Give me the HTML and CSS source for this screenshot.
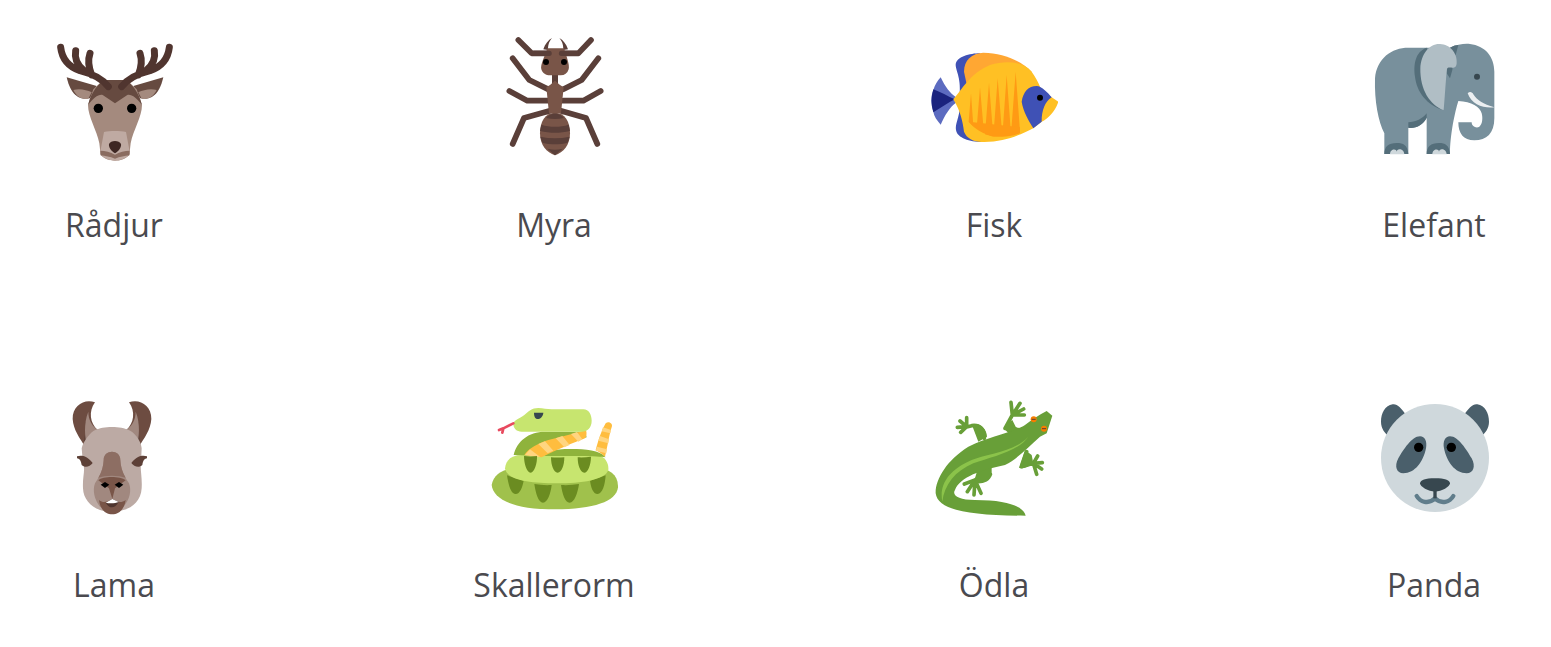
FILE: index.html

```html
<!DOCTYPE html>
<html lang="sv">
<head>
  <meta charset="UTF-8">
  <title>Djur</title>
  <link rel="stylesheet" href="styles.css">
</head>
<body>
  <div class="animal-grid">

    <div class="animal">
      <svg class="animal-icon" viewBox="30 9 384 384">
        <path d="M80 142L170 168L150 205C125 210 95 205 80 142Z" fill="#664a40"/>
        <path d="M100 180C120 175 140 180 155 187L145 206C125 210 110 200 100 180Z" fill="#a48a7e"/>
        <path d="M370 142L280 168L300 205C325 210 355 205 370 142Z" fill="#664a40"/>
        <path d="M350 180C330 175 310 180 295 187L305 206C325 210 340 200 350 180Z" fill="#a48a7e"/>
        <path d="M190 150H260L290 178L306 225C306 260 280 300 272 340L268 375C255 388 240 392 225 392C210 392 195 388 182 375L178 340C170 300 144 260 144 225L160 178Z" fill="#a48a7e"/>
        <path d="M190 150H260C270 160 295 180 306 225C290 205 275 192 262 195L225 220L188 195C175 192 160 205 144 225C155 180 180 160 190 150Z" fill="#664a40"/>
        <path d="M192 306C210 302 240 302 258 306L270 370C262 385 240 392 225 392C210 392 188 385 180 370Z" fill="#bfaaa2"/>
        <path d="M181 362C195 362 212 366 225 374C238 366 255 362 269 362L268 376C255 378 240 380 225 386C210 380 195 378 182 376Z" fill="#8a6c60"/>
        <path d="M207 342C212 330 238 330 243 342C245 352 235 364 225 370C215 364 205 352 207 342Z" fill="#3e2723"/>
        <path d="M62 52C66 85 85 110 120 122C160 132 190 150 205 170M107 62C103 85 112 105 130 120M150 70C143 90 145 110 155 135M388 52C384 85 365 110 330 122C290 132 260 150 245 170M343 62C347 85 338 105 320 120M300 70C307 90 305 110 295 135" fill="none" stroke="#50352f" stroke-width="21" stroke-linecap="round"/>
        <circle cx="175" cy="235" r="14" fill="#000"/>
        <circle cx="275" cy="235" r="14" fill="#000"/>
      </svg>
      <div class="animal-name">Rådjur</div>
    </div>

    <div class="animal">
      <svg class="animal-icon" viewBox="0 9 384 384">
        <path d="M85 30L125 70H180M303 30L265 70H210M68 85L118 150L175 178M325 85L275 150L220 178M58 183L112 212H175M332 183L280 212H220M68 342L102 264L180 242M322 342L288 264L212 242" fill="none" stroke="#5a3f39" stroke-width="17" stroke-linecap="round" stroke-linejoin="round"/>
        <path d="M160 58C165 42 175 30 186 24C176 36 174 46 174 60ZM234 58C229 42 219 30 208 24C218 36 220 46 220 60Z" fill="#5a3f39"/>
        <rect x="186" y="128" width="18" height="40" fill="#5a3f39"/>
        <path d="M172 55H222C228 75 240 105 236 118C232 130 224 136 212 136H180C168 136 158 130 154 118C150 105 166 75 172 55Z" fill="#795548"/>
        <path d="M130 62H178C188 62 188 78 178 78H130ZM214 62H265V78H214C204 78 204 62 214 62Z" fill="#5a3f39"/>
        <circle cx="168" cy="96" r="9" fill="#000"/>
        <circle cx="222" cy="96" r="9" fill="#000"/>
        <path d="M180 165L195 152L210 165L221 172L213 250H177L169 172Z" fill="#795548"/>
        <path d="M195 248C225 248 240 275 240 310C240 345 220 368 195 376C170 368 150 345 150 310C150 275 165 248 195 248Z" fill="#795548"/>
        <path d="M168 264C182 246 208 246 222 264C205 268 185 268 168 264ZM154 284C180 292 210 292 236 284L240 303C210 310 180 310 150 303ZM151 320C180 326 210 326 239 320L233 338C210 344 180 344 157 338ZM172 356C188 360 202 360 218 356L195 376Z" fill="#5a3f39"/>
      </svg>
      <div class="animal-name">Myra</div>
    </div>

    <div class="animal">
      <svg class="animal-icon" viewBox="30 -21 384 384">
        <path d="M62 112C75 140 90 160 108 172V188C90 200 75 225 62 254C50 240 42 228 40 215C32 190 32 170 40 150C45 135 52 122 62 112Z" fill="#5c6bc0"/>
        <path d="M40 148C60 155 85 170 105 178C85 188 60 205 40 217C33 195 33 170 40 148Z" fill="#1a237e"/>
        <path d="M180 40C150 40 108 50 107 75C108 95 125 115 118 175C125 225 105 245 108 270C112 295 150 305 185 306Z" fill="#3f51b5"/>
        <path d="M132 95C132 60 155 40 190 38C250 40 300 60 335 95L150 180Z" fill="#ffa733"/>
        <path d="M100 178C125 150 150 100 210 75C260 60 310 65 335 95C345 110 355 125 362 145L395 172L415 185C405 215 385 235 365 245L340 265C300 285 250 308 185 306C160 305 140 295 132 275C128 245 122 215 100 178Z" fill="#ffc024"/>
        <path d="M146 245L153 160L160 258ZM170 265L180 142L192 280ZM195 283L207 128L220 290ZM220 290L233 115L247 288ZM247 288L260 105L273 283ZM273 283L287 95L300 275Z" fill="#ff9a14"/>
        <path d="M146 245L300 262V280C270 292 240 292 215 287C190 282 165 268 146 245Z" fill="#ff9a14"/>
        <path d="M305 185C310 155 325 138 350 138C365 138 385 160 395 172C375 185 365 210 365 245L340 265C325 240 310 215 305 185Z" fill="#3f51b5"/>
        <circle cx="360" cy="173" r="9" fill="#000"/>
      </svg>
      <div class="animal-name">Fisk</div>
    </div>

    <div class="animal">
      <svg class="animal-icon" viewBox="15 -6 384 384">
        <path d="M30 130C35 70 80 38 130 38H255C275 28 300 25 315 27C360 32 388 65 388 110V250C388 295 365 316 328 316C295 316 280 295 280 262H320C320 275 335 281 343 275C352 268 354 250 350 235C345 215 320 200 280 198C270 230 255 300 255 357H185V248C175 270 150 282 130 278V357H58V295C40 260 28 200 30 130Z" fill="#78909c"/>
        <path d="M130 262C150 262 175 250 185 235V248C175 270 150 282 130 278Z" fill="#546e7a"/>
        <path d="M185 38C150 50 145 90 150 125C155 170 185 210 236 226Z" fill="#546e7a"/>
        <path d="M255 38C265 32 275 30 280 30L272 60L262 60ZM245 100C255 85 265 95 262 105L255 130L245 115Z" fill="#546e7a"/>
        <path d="M166 100C168 55 195 25 225 27C255 28 278 55 275 85C273 110 250 90 246 102C243 125 240 180 236 226C195 210 165 165 166 100Z" fill="#b0bec5"/>
        <path d="M308 175C315 168 322 172 325 178C335 195 355 208 388 217C355 220 320 210 308 175Z" fill="#eceff1"/>
        <circle cx="336" cy="125" r="9" fill="#37474f"/>
        <path d="M58 357C58 335 70 324 95 324C115 324 128 330 130 357ZM185 357C185 335 197 324 222 324C240 324 253 330 255 357Z" fill="#546e7a"/>
        <path d="M75 358C75 340 95 340 95 350C95 338 118 340 118 358ZM202 358C202 340 222 340 222 350C222 338 245 340 245 358Z" fill="#cfd8dc"/>
      </svg>
      <div class="animal-name">Elefant</div>
    </div>

    <div class="animal">
      <svg class="animal-icon" viewBox="-15 -6 384 384">
        <path d="M120 22C90 10 52 30 53 72C55 105 75 130 90 155L128 105C105 85 100 50 120 22Z" fill="#6d4c41"/>
        <path d="M222 22C252 10 290 30 289 72C287 105 267 130 252 155L214 105C237 85 242 50 222 22Z" fill="#6d4c41"/>
        <path d="M92 80C95 100 85 130 90 155L110 125Z" fill="#4e342e"/>
        <path d="M250 80C247 100 257 130 252 155L232 125Z" fill="#4e342e"/>
        <path d="M100 50C85 85 90 130 95 150L130 105C112 95 100 75 100 50Z" fill="#a1887f"/>
        <path d="M242 50C257 85 252 130 247 150L212 105C230 95 242 75 242 50Z" fill="#a1887f"/>
        <path d="M115 108C135 98 150 96 171 96C192 96 207 98 227 108C245 120 258 140 260 160L258 205C255 225 262 245 260 280C258 315 235 338 205 345C185 352 155 352 135 345C105 335 85 310 84 280C82 245 92 225 84 205L80 160C85 140 100 120 115 108Z" fill="#bcaaa4"/>
        <path d="M66 184C80 180 95 182 113 204C105 215 90 220 80 210C78 198 75 192 66 190ZM276 184C262 180 247 182 229 204C237 215 252 220 262 210C264 198 267 192 276 190Z" fill="#5d4037"/>
        <path d="M146 195C146 178 158 170 171 170C184 170 196 178 196 195C197 220 205 240 222 265C230 285 225 315 205 335C190 345 150 345 135 335C118 315 112 285 120 265C137 240 145 220 146 195Z" fill="#a1887f"/>
        <path d="M146 195C146 178 158 170 171 170C184 170 196 178 196 195C197 215 202 232 212 248C190 240 150 240 130 248C140 232 145 215 146 195Z" fill="#8d6e63"/>
        <path d="M130 256C145 243 195 243 212 256L180 280L172 312L162 280Z" fill="#795548"/>
        <path d="M137 269L150 261L163 269L150 279ZM179 269L192 261L205 269L192 279Z" fill="#000"/>
        <path d="M132 315C145 325 155 322 172 312C188 322 198 325 212 315C208 345 190 358 172 358C152 358 136 345 132 315Z" fill="#795548"/>
        <path d="M152 323L172 312L191 321C180 342 163 342 152 323Z" fill="#4e342e"/>
        <path d="M152 323L172 312L191 321C180 326 163 326 152 323Z" fill="#fff"/>
      </svg>
      <div class="animal-name">Lama</div>
    </div>

    <div class="animal">
      <svg class="animal-icon" viewBox="15 -21 384 384">
        <path d="M20 255C25 225 50 210 80 205H330C375 205 400 225 399 262C395 305 325 328 210 328C90 328 25 300 20 255Z" fill="#a0c14c"/>
        <path d="M66 226L116 242C112 262 105 282 92 282C78 282 70 255 66 226ZM148 252C165 255 182 256 200 255C197 280 188 308 174 308C160 308 152 280 148 252ZM228 255C246 256 264 255 282 252C278 280 268 308 254 308C240 308 232 282 228 255ZM315 242L362 226C360 255 352 282 338 282C324 282 318 262 315 242Z" fill="#6b8c21"/>
        <path d="M60 205C62 180 80 165 110 165H340C360 170 372 190 370 210C360 240 290 250 215 250C130 250 65 240 60 205Z" fill="#c7e56f"/>
        <path d="M178 168C185 155 200 147 260 147C300 147 345 150 362 172C340 168 250 168 178 168Z" fill="#8fb33c"/>
        <path d="M86 165C95 125 130 95 180 95H300L305 112C250 130 190 145 170 168Z" fill="#8fb33c"/>
        <path d="M118 165C130 145 160 130 190 120C230 110 270 100 303 90C306 100 305 110 300 115C260 130 220 148 170 172Z" fill="#ffbd3e"/>
        <path d="M120 165L135 148L165 170H150ZM160 132L180 124L205 152L188 160ZM212 115L232 108L254 135L238 142ZM258 102L276 96L292 118L280 125Z" fill="#ffd580"/>
        <path d="M85 72C85 62 100 58 118 45C130 35 140 24 160 24C175 24 185 28 200 28H295C312 28 320 45 320 62C320 82 308 95 290 95H110C95 95 85 85 85 72Z" fill="#c7e56f"/>
        <path d="M147 38H175C174 50 165 57 158 57C150 57 147 48 147 38Z" fill="#37474f"/>
        <path d="M85 70L55 85M42 90L55 85L52 98" fill="none" stroke="#e84a5f" stroke-width="8" stroke-linecap="round" stroke-linejoin="round"/>
        <path d="M332 150C340 120 350 90 362 70C372 62 385 72 380 82C372 105 368 140 360 170C350 160 340 155 332 150Z" fill="#ffbd3e"/>
        <path d="M345 108L372 118L370 130L340 122ZM336 140L366 148L364 160L332 152ZM354 82L378 90L376 100L350 94Z" fill="#ffd580"/>
        <path d="M117 168C130 170 143 170 156 168C157 190 148 218 137 218C125 218 117 190 117 168ZM198 172C210 173 225 173 238 172C238 195 230 218 218 218C206 218 198 195 198 172ZM278 172C290 173 305 172 318 170C318 195 308 218 298 218C286 218 278 195 278 172Z" fill="#6b8c21"/>
      </svg>
      <div class="animal-name">Skallerorm</div>
    </div>

    <div class="animal">
      <svg class="animal-icon" viewBox="15 -6 384 384">
        <path d="M178 130C180 105 165 88 140 92L125 96M125 95L125 68M125 95L105 78M125 95L97 97M125 95L107 112M290 105L240 100L262 60M262 60L258 22M262 60L285 25M262 60L296 42M262 60L298 60M305 170L290 215L325 205M325 205L338 183M325 205L352 203M325 205L350 222M325 205L335 238M190 235L150 255M150 255L118 267M150 255L127 290M150 255L147 300M150 255L168 295" fill="none" stroke="#689f38" stroke-width="11" stroke-linecap="round" stroke-linejoin="round"/>
        <path d="M140 88C165 82 185 100 186 125L160 140ZM236 100C245 85 250 85 262 75L272 95L290 110L250 114ZM282 218C290 195 295 180 300 165L320 180L325 205C310 215 295 224 282 218ZM152 250C170 225 195 212 202 238C195 262 170 268 152 265ZM160 215L200 215L200 240L150 250Z" fill="#689f38"/>
        <path d="M382 62L365 48C340 60 320 75 300 90C265 112 190 125 130 155C65 195 30 255 32 295C38 345 130 362 302 362C295 335 250 315 150 315C100 315 80 300 90 285C105 245 170 225 240 210C280 190 310 155 345 125L365 115Z" fill="#689f38"/>
        <path d="M52 320C42 270 70 225 140 195C190 175 270 170 310 125C280 170 200 185 145 205C90 228 58 270 52 320Z" fill="#8bc34a"/>
        <circle cx="326" cy="73" r="9" fill="#f57c00"/>
        <circle cx="357" cy="101" r="9" fill="#f57c00"/>
        <path d="M320 73H332M351 101H363" stroke="#5d4037" stroke-width="3"/>
      </svg>
      <div class="animal-name">Ödla</div>
    </div>

    <div class="animal">
      <svg class="animal-icon" viewBox="0 -6 384 384">
        <path d="M108 60C95 40 80 25 68 28C45 32 33 55 33 80C33 100 45 115 55 122ZM282 60C295 40 310 25 322 28C345 32 357 55 357 80C357 100 345 115 335 122Z" fill="#4a5f6b"/>
        <circle cx="195" cy="189" r="162" fill="#cfd8dc"/>
        <path d="M150 124C165 124 172 140 168 160C160 200 135 235 100 235C80 235 72 215 85 190C100 165 125 124 150 124ZM240 124C225 124 218 140 222 160C230 200 255 235 290 235C310 235 318 215 305 190C290 165 265 124 240 124Z" fill="#4a5f6b"/>
        <circle cx="146" cy="157" r="14" fill="#000"/>
        <circle cx="244" cy="157" r="14" fill="#000"/>
        <path d="M140 303C150 320 175 330 195 310C215 330 240 320 250 303" fill="none" stroke="#607d8b" stroke-width="13" stroke-linecap="round" stroke-linejoin="round"/>
        <path d="M190 285H200V310H190Z" fill="#37474f"/>
        <path d="M150 265C152 255 165 250 195 250C225 250 238 255 240 265C240 275 215 290 195 290C175 290 150 275 150 265Z" fill="#37474f"/>
      </svg>
      <div class="animal-name">Panda</div>
    </div>

  </div>
</body>
</html>
```

FILE: styles.css

```css
body {
  margin: 0;
  background-color: #fff;
  font-family: "Open Sans", sans-serif;
}
.animal-grid {
  display: grid;
  grid-template-columns: repeat(4, 228px);
  column-gap: 212px;
  row-gap: 144px;
  padding-top: 33px;
}
.animal {
  display: flex;
  flex-direction: column;
  align-items: center;
  gap: 40px;
}
.animal-icon {
  display: block;
  width: 128px;
  height: 128px;
}
.animal-name {
  font-size: 32px;
  line-height: 48px;
  color: #4a4a4f;
}
```
